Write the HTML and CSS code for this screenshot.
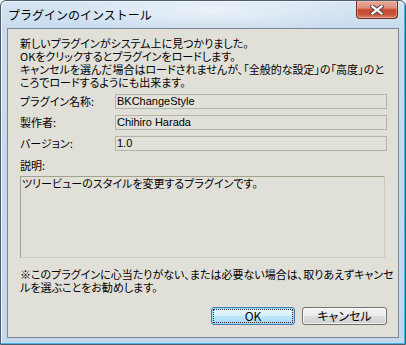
FILE: index.html
```html
<!DOCTYPE html>
<html lang="ja">
<head>
<meta charset="utf-8">
<link rel="stylesheet" href="styles.css">
</head>
<body>
<div class="window">
  <div class="titlebar">
    <span class="title">プラグインのインストール</span>
    <div class="close">
      <svg width="14" height="10" viewBox="0 0 14 10">
        <path d="M2.5 1.5 L11.5 8.5 M11.5 1.5 L2.5 8.5" stroke="#5a4c4c" stroke-width="4.2" stroke-linecap="square" fill="none"/>
        <path d="M2.5 1.5 L11.5 8.5 M11.5 1.5 L2.5 8.5" stroke="#ffffff" stroke-width="2.2" stroke-linecap="square" fill="none"/>
      </svg>
    </div>
  </div>
  <div class="client">
    <p class="intro">新しいプラグインがシステム上に見つかりました。<br>OKをクリックするとプラグインをロードします。<br>キャンセルを選んだ場合はロードされませんが、「全般的な設定」の「高度」のと<br>ころでロードするようにも出来ます。</p>
    <div class="fields">
      <span class="label">プラグイン名称:</span><div class="box">BKChangeStyle</div>
      <span class="label">製作者:</span><div class="box">Chihiro Harada</div>
      <span class="label">バージョン:</span><div class="box">1.0</div>
    </div>
    <div class="desc-label">説明:</div>
    <div class="desc">ツリービューのスタイルを変更するプラグインです。</div>
    <p class="note">※このプラグインに心当たりがない、または必要ない場合は、取りあえずキャンセ<br>ルを選ぶことをお勧めします。</p>
    <div class="buttons">
      <button class="btn default"><span class="focus">OK</span></button>
      <button class="btn"><span class="plain">キャンセル</span></button>
    </div>
  </div>
</div>
</body>
</html>
```

FILE: styles.css
```css
html, body {
  margin: 0;
  padding: 0;
  background: #ffffff;
}

.window {
  width: 406px;
  height: 345px;
  box-sizing: border-box;
  border: 1px solid #4d5d6d;
  border-radius: 6px 6px 0 0;
  padding: 0 6px 6px 6px;
  display: flex;
  flex-direction: column;
  background:
    radial-gradient(ellipse 160px 22px at 210px 10px, rgba(255,255,255,0.55), rgba(255,255,255,0) 100%),
    linear-gradient(180deg, #d6e5f2 0px, #c9dcee 27px, #c2d8ec 100%);
  box-shadow: inset -1px -1px 0 #45b3ea, inset 1px 1px 0 #eef5fb;
  font-family: "Noto Sans CJK JP", sans-serif;
}

.titlebar {
  height: 27px;
  flex: none;
  display: flex;
  justify-content: space-between;
  align-items: flex-start;
  padding-left: 1px;
}

.title {
  font-family: "Noto Sans CJK JP", sans-serif;
  font-size: 12px;
  line-height: 14px;
  margin-top: 7px;
  color: #000;
}

.close {
  width: 42px;
  height: 18px;
  box-sizing: border-box;
  margin-right: 1px;
  border: 1px solid #6a2d24;
  border-top: none;
  border-radius: 0 0 4px 4px;
  background: linear-gradient(180deg, #e9aa9b 0%, #df8e7c 40%, #c8472f 52%, #c9553b 80%, #d9866a 100%);
  box-shadow: inset 0 0 0 1px rgba(255, 200, 190, 0.45);
  display: flex;
  align-items: center;
  justify-content: center;
}

.client {
  flex: 1;
  box-sizing: border-box;
  border: 1px solid #7a8896;
  background: #e0dfd8;
  padding: 8px 10px 0 12px;
  display: flex;
  flex-direction: column;
  font-size: 11px;
  line-height: 13px;
  color: #000;
  font-feature-settings: "palt";
}

.intro, .note {
  margin: 0;
  white-space: nowrap;
}

.intro .tight {
  letter-spacing: -0.3px;
}

.fields {
  margin-top: 5px;
  display: grid;
  grid-template-columns: 95px 272px;
  grid-auto-rows: 15px;
  row-gap: 6px;
  align-items: center;
}

.label {
  line-height: 13px;
}

.box {
  height: 15px;
  box-sizing: border-box;
  border: 1px solid #b4b4a8;
  background: #e1e0d9;
  padding-left: 1px;
  font-family: "Liberation Sans", Arial, sans-serif;
  font-size: 11px;
  line-height: 13px;
}

.desc-label {
  margin-top: 8px;
}

.desc {
  margin-top: 4px;
  width: 365px;
  height: 82px;
  box-sizing: border-box;
  border: 1px solid;
  border-color: #a2a28c #cbcbbf #cbcbbf #a2a28c;
  padding: 0 0 0 1px;
  background: #e0dfd8;
}

.note {
  margin-top: 10px;
}

.buttons {
  margin-top: 13px;
  display: flex;
  justify-content: flex-end;
  gap: 7px;
  margin-right: 1px;
}

.btn {
  width: 85px;
  height: 18px;
  box-sizing: border-box;
  padding: 1px;
  border: 1px solid #707070;
  border-radius: 3px;
  background: linear-gradient(180deg, #f3f3f3 0%, #ebebeb 48%, #dddddd 52%, #cfcfcf 100%);
  box-shadow: inset 0 0 0 1px rgba(255,255,255,0.7);
  font-family: "Noto Sans CJK JP", sans-serif;
  font-size: 12px;
  line-height: 12px;
  color: #000;
  font-feature-settings: "palt";
}

.btn.default {
  width: 84px;
  border-color: #3c7fb1;
  background: linear-gradient(180deg, #eaf6fd 0%, #d9f0fc 48%, #bee6fd 52%, #a7d9f5 100%);
  box-shadow: inset 0 0 0 1px #9edcf6;
}

.focus, .plain {
  display: flex;
  height: 100%;
  box-sizing: border-box;
  align-items: center;
  justify-content: center;
}

.focus {
  border: 1px dotted #3a2020;
}
```
